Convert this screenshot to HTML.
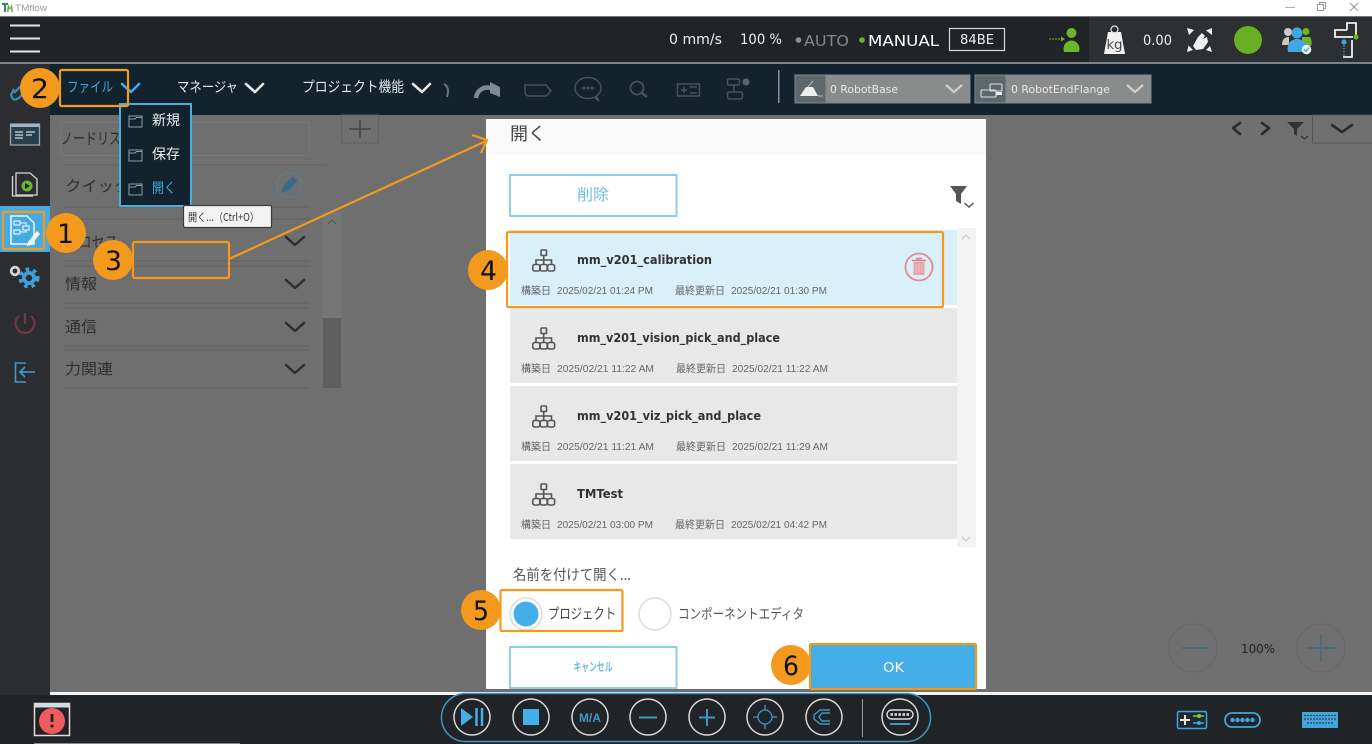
<!DOCTYPE html>
<html lang="ja">
<head>
<meta charset="utf-8">
<title>TMflow</title>
<style>
html,body{margin:0;padding:0;width:1372px;height:744px;overflow:hidden;background:#6f6f6f}
svg{display:block;position:absolute;left:0;top:0;filter:blur(.35px)}
text{font-family:"Liberation Sans","Noto Sans CJK JP",sans-serif;dominant-baseline:alphabetic}
.j{font-family:"Noto Sans CJK JP","Liberation Sans",sans-serif}
.d{font-family:"DejaVu Sans","Noto Sans CJK JP",sans-serif}
.ch{fill:none;stroke-width:2.6;stroke-linecap:round;stroke-linejoin:round}
.or{fill:none;stroke:#f39a1e;stroke-width:2.2}
.num{font-family:"DejaVu Sans",sans-serif;font-size:27px;fill:#111}
.cir{fill:#f39a1e}
</style>
</head>
<body>
<svg width="1372" height="744" viewBox="0 0 1372 744" xmlns="http://www.w3.org/2000/svg">
<defs>
<g id="tree" fill="none" stroke="#555" stroke-width="1.600">
<rect x="9" y="0.500" width="5.500" height="5.500" rx=".8"/>
<path d="M11.700 6V10M4 15V10.500H19.500V15M11.700 10.500V15"/>
<rect x="0.800" y="15" width="7" height="6.500" rx="1.800"/><rect x="8.200" y="15" width="7" height="6.500" rx="1.800"/><rect x="15.600" y="15" width="7" height="6.500" rx="1.800"/>
</g>
<g id="folder" fill="none" stroke="#8f9ca2" stroke-width="1">
<path d="M0 12V1H13V12Z"/><path d="M0 4H6L7.500 2.500H13"/>
</g>
</defs>

<!-- base areas -->
<rect x="0" y="0" width="1372" height="16" fill="#fff"/>
<rect x="0" y="16" width="1372" height="1" fill="#777"/>
<rect x="0" y="17" width="1372" height="46" fill="#212427"/>
<rect x="1089" y="17" width="283" height="46" fill="#2d3033"/>
<rect x="0" y="62" width="1372" height="2" fill="#7b8488"/>
<rect x="0" y="64" width="50" height="631" fill="#2b2d30"/>
<rect x="50" y="64" width="1322" height="51" fill="#12232d"/>
<rect x="50" y="115" width="1322" height="578" fill="#6f6f6f"/>
<rect x="50" y="692" width="1322" height="3" fill="#f4f4f4"/>
<rect x="0" y="695" width="1372" height="49" fill="#212427"/>
<rect x="34" y="743" width="206" height="1" fill="#8a8a8a"/>

<!-- title bar -->
<path d="M2 3H8V5H6V12H4V5H2Z" fill="#2b8a6b"/><path d="M7 12L8 4 10 8 12 4 13 12H11.500L11 8 10 10 9 8 8.500 12Z" fill="#6aa531"/>
<text x="15" y="11" font-size="9.500" fill="#9a9a9a" textLength="32" lengthAdjust="spacingAndGlyphs">TMflow</text>
<path d="M1285 7.500H1295" stroke="#aaa" stroke-width="1"/>
<rect x="1317.500" y="4.500" width="6" height="6" fill="none" stroke="#999"/><path d="M1319.500 4.500V2.500H1325.500V8.500H1323.500" fill="none" stroke="#999"/>
<path d="M1350 3L1358 11M1358 3L1350 11" stroke="#999" stroke-width="1"/>

<!-- top bar -->
<path d="M10 25.500H40M10 38.500H40M10 51.500H40" stroke="#e6e6e6" stroke-width="2"/>
<text class="d" x="669" y="44" font-size="14" fill="#eee" textLength="53" lengthAdjust="spacingAndGlyphs">0 mm/s</text>
<text class="d" x="740" y="44" font-size="14" fill="#eee" textLength="42" lengthAdjust="spacingAndGlyphs">100 %</text>
<circle cx="798.500" cy="40" r="2.800" fill="#8f9193"/>
<text class="d" x="804" y="46" font-size="15" fill="#85878a" textLength="45" lengthAdjust="spacingAndGlyphs">AUTO</text>
<circle cx="862" cy="40" r="2.800" fill="#6fb52c"/>
<text class="d" x="868" y="46" font-size="15" fill="#fff" textLength="71" lengthAdjust="spacingAndGlyphs">MANUAL</text>
<rect x="949.500" y="28.500" width="55" height="22" fill="none" stroke="#d8d8d8" stroke-width="1.200"/>
<text class="d" x="960" y="44" font-size="13" fill="#eee" textLength="34" lengthAdjust="spacingAndGlyphs">84BE</text>
<path d="M1049 39H1062" stroke="#6fb52c" stroke-width="1" stroke-dasharray="2 1"/><path d="M1061 36.500L1065 39 1061 41.500Z" fill="#6fb52c"/>
<circle cx="1071.500" cy="33" r="5" fill="#6fb52c"/><path d="M1064 52C1062 45 1067 40.500 1071.500 40.500S1081 45 1079 52Z" fill="#6fb52c"/>

<path d="M1108 32H1121L1125 54H1104Z" fill="#f2f2f2"/><circle cx="1114.500" cy="29.500" r="3.500" fill="none" stroke="#ddd" stroke-width="1.300"/>
<text class="d" x="1106.500" y="49" font-size="13" fill="#444" textLength="16" lengthAdjust="spacingAndGlyphs">kg</text>
<text class="d" x="1143" y="45" font-size="14" fill="#eee" textLength="29" lengthAdjust="spacingAndGlyphs">0.00</text>
<g fill="#f0f0f0">
<path d="M1193 46L1198 37 1202 33 1205 36 1203 39 1207 37 1208 42 1203 49 1196 50Z"/>
<path d="M1187 28L1194 30 1189 35ZM1212 28L1212 35 1206 30.500ZM1187 52L1188.500 45.500 1193 50ZM1212 52L1206 50 1210 46Z"/>
</g>
<circle cx="1288" cy="32" r="4" fill="#c9c9c9"/><path d="M1282 45C1282 39 1285 37 1289 37V45Z" fill="#c9c9c9"/>
<circle cx="1306" cy="31.500" r="3.500" fill="#6fb52c"/><path d="M1302 46V37H1310C1312 40 1312 43 1311 46Z" fill="#6fb52c"/>
<circle cx="1297" cy="33" r="5.500" fill="#41a7e0"/>
<path d="M1288 52C1286 44 1291 39 1297 39S1309 44 1307 52Z" fill="#41a7e0"/>
<circle cx="1306.500" cy="49.500" r="4.800" fill="#e8f3f8"/><path d="M1304 49.500L1306 51.500 1309 47.500" fill="none" stroke="#41a7e0" stroke-width="1.300"/>
<circle cx="1248" cy="40" r="14" fill="#6aaf23"/>
<path d="M1347 30V23H1356V35M1347 30H1335V37H1353M1352 40V57H1343" fill="none" stroke="#f0f0f0" stroke-width="1.800"/>
<circle cx="1356" cy="37" r="2.500" fill="#6fb52c"/>
<circle cx="1344" cy="42" r="2.500" fill="#41a7e0"/><path d="M1344 45V56" stroke="#41a7e0" stroke-width="1.200" stroke-dasharray="1.500 1.500"/>

<!-- toolbar menu -->
<text class="j" x="67" y="92" font-size="14" fill="#44a8de" textLength="46" lengthAdjust="spacingAndGlyphs">ファイル</text>
<polyline class="ch" points="122,84 131,92 139,84" stroke="#44a8de"/>
<text class="j" x="177" y="92" font-size="14" fill="#e4e6e7" textLength="61" lengthAdjust="spacingAndGlyphs">マネージャ</text>
<polyline class="ch" points="246,84 255,92 263,84" stroke="#e8e8e8"/>
<text class="j" x="302" y="92" font-size="14.500" fill="#e4e6e7" textLength="102" lengthAdjust="spacingAndGlyphs">プロジェクト機能</text>
<polyline class="ch" points="413,84 422,92 430,84" stroke="#e8e8e8"/>

<g fill="none" stroke="#47545a" stroke-width="1.500">
<path d="M444 84C448 86 449 91 447 97" stroke="#6c777c" stroke-width="2"/>
<path d="M476 98C477 90 484 86 491 88" stroke="#7e8a90" stroke-width="4.500"/>
<path d="M490 82L500 87 500 97 490 93Z" fill="#7e8a90" stroke="none"/>
<path d="M525 85H546L551 91 546 96H530Q525 96 525 92Z"/>
<ellipse cx="588" cy="88" rx="13" ry="10.500"/><path d="M595 98L599 101 596 96"/>
<circle cx="584" cy="88" r=".8" fill="#47545a"/><circle cx="588" cy="88" r=".8" fill="#47545a"/><circle cx="592" cy="88" r=".8" fill="#47545a"/>
<circle cx="637" cy="88" r="6.500" stroke-width="1.800"/><path d="M642 93L647 97" stroke-width="2.500"/>
<rect x="677.500" y="84" width="22" height="12"/><path d="M681 90H687M684 87V93M690 87H697M690 93H697"/>
<rect x="727.500" y="79" width="12" height="6" rx="1.500"/><rect x="727.500" y="92" width="15" height="7" rx="2"/><path d="M734 85V92"/>
<circle cx="746" cy="82" r="3.500" fill="#5a676d" stroke="none"/>
</g>
<rect x="778" y="70" width="1.500" height="33" fill="#8a9297"/>
<rect x="795" y="75" width="175" height="28" fill="#8a8b8b" stroke="#7b8a92"/>
<rect x="795.500" y="75.500" width="30" height="27" fill="#5d686d"/>
<path d="M800 96L806 87H813L818 96Z" fill="#eee"/><path d="M808 87L813 81M818 96H823" stroke="#bbb" stroke-width="1"/>
<text class="d" x="830" y="93" font-size="10.500" fill="#e8e8e8" textLength="68" lengthAdjust="spacingAndGlyphs">0&#160;RobotBase</text>
<polyline points="946,85 954,92 962,85" fill="none" stroke="#cfcfcf" stroke-width="2.200"/>
<rect x="975" y="75" width="176" height="28" fill="#8a8b8b" stroke="#7b8a92"/>
<rect x="975.500" y="75.500" width="30" height="27" fill="#5d686d"/>
<g fill="none" stroke="#ddd" stroke-width="1.100"><rect x="990" y="84" width="12" height="7" rx="1"/><rect x="981" y="90" width="15" height="7" rx="1"/></g><rect x="996" y="92" width="6" height="3" fill="#eee"/>
<text class="d" x="1011" y="93" font-size="10.500" fill="#e8e8e8" textLength="99" lengthAdjust="spacingAndGlyphs">0&#160;RobotEndFlange</text>
<polyline points="1127,85 1135,92 1143,85" fill="none" stroke="#cfcfcf" stroke-width="2.200"/>

<!-- left panel -->
<rect x="60.500" y="122.500" width="249" height="33" fill="none" stroke="#777"/>
<text class="j" x="61" y="144" font-size="16" fill="#2d2d2d" textLength="72" lengthAdjust="spacingAndGlyphs">ノードリスト</text>
<path d="M64 165H327M64 207H310M64 219H310M64 261H310M64 266H310M64 303H310M64 308H310M64 346H310M64 350H310M64 388H310" stroke="#606060" stroke-width="1"/>
<text class="j" x="65" y="191" font-size="15" fill="#2f2f2f" textLength="128" lengthAdjust="spacingAndGlyphs">クイックリスト...</text>
<circle cx="289" cy="185" r="12.500" fill="none" stroke="#5f7a8a" stroke-width="1.500"/>
<path d="M281.500 192.500L283 186 293 176.500 297.500 181 288 191Z" fill="#376a87"/>
<text class="j" x="65" y="247" font-size="15" fill="#2f2f2f" textLength="53" lengthAdjust="spacingAndGlyphs">プロセス</text>
<text class="j" x="65" y="289" font-size="15" fill="#2f2f2f" textLength="32" lengthAdjust="spacingAndGlyphs">情報</text>
<text class="j" x="65" y="332" font-size="15" fill="#2f2f2f" textLength="32" lengthAdjust="spacingAndGlyphs">通信</text>
<text class="j" x="65" y="374" font-size="15" fill="#2f2f2f" textLength="48" lengthAdjust="spacingAndGlyphs">力関連</text>
<g class="ch" stroke="#2e2e2e" fill="none" style="stroke-width:2.500">
<polyline points="286,237 295,245 304,237"/><polyline points="286,280 295,288 304,280"/><polyline points="286,323 295,331 304,323"/><polyline points="286,365 295,373 304,365"/>
</g>
<rect x="323" y="212" width="18" height="106" fill="#767676"/>
<rect x="323" y="318" width="18" height="70" fill="#5e5e5e"/>
<polyline points="328,224 332,220 336,224" fill="none" stroke="#555" stroke-width="1.200"/>

<!-- plus box + right tools -->
<rect x="341.500" y="115" width="37" height="28" fill="none" stroke="#616161"/>
<path d="M360 120V138M349 129H371" stroke="#444" stroke-width="1.500"/>
<polyline class="ch" points="1240,123 1233,128 1240,134" stroke="#2a2a2a"/>
<polyline class="ch" points="1262,123 1269,128 1262,134" stroke="#2a2a2a"/>
<path d="M1287 122H1304L1297 129V136L1294 134V129Z" fill="#333"/>
<polyline points="1301,136 1304.500,139 1308,136" fill="none" stroke="#333" stroke-width="1.200"/>
<rect x="1312.500" y="115" width="60" height="28" fill="none" stroke="#555"/>
<polyline class="ch" points="1332,125 1342,132 1352,125" stroke="#2a2a2a"/>

<!-- zoom controls -->
<circle cx="1193" cy="648" r="24" fill="none" stroke="#666" stroke-width="1"/>
<path d="M1182 648H1208" stroke="#4c6b7a" stroke-width="2"/>
<text class="d" x="1241" y="653" font-size="12.500" fill="#222" textLength="34" lengthAdjust="spacingAndGlyphs">100%</text>
<circle cx="1321" cy="648" r="24" fill="none" stroke="#666" stroke-width="1"/>
<path d="M1307 648H1336M1321 634V662" stroke="#4c6b7a" stroke-width="2"/>

<!-- sidebar icons -->
<g fill="none" stroke="#3d8cb8" stroke-width="2.200"><path d="M14 96L24 86Q28 83 28 90L20 100Q13 106 11 98L14 92" transform="translate(0,-3)"/></g>
<rect x="10.500" y="124" width="29" height="21" fill="#2a3f4d" stroke="#9aa6ac" stroke-width="1.300"/>
<rect x="11" y="124" width="28" height="3" fill="#9fb4c0"/>
<path d="M15 132H23M15 135H23M15 138H23M26 132H35M26 135H32" stroke="#cfd6da" stroke-width="1.300"/>
<path d="M16 173H30L37 179V195H16Z" fill="#2b2d30" stroke="#d6d6d6" stroke-width="1.300"/>
<path d="M12.500 176V196H33" fill="none" stroke="#d6d6d6" stroke-width="1.300"/>
<circle cx="27" cy="186" r="5.500" fill="#6fb52c"/><path d="M25 183V189L30 186Z" fill="#222"/>
<rect x="0" y="206" width="50" height="46" fill="#46abe0"/>
<path d="M11 216H27L34 223V244H11Z" fill="none" stroke="#eef8fd" stroke-width="1.500"/>
<g fill="none" stroke="#eef8fd" stroke-width="1.100"><rect x="14" y="221" width="6" height="4"/><rect x="14" y="230" width="6" height="4"/><rect x="23" y="226" width="6" height="4"/><path d="M20 223H26V226M20 232H26V230"/></g>
<path d="M28 242L37 231 40 234 31 245 27 246Z" fill="#f6f6f6"/>
<g fill="#3f9fd8"><circle cx="29" cy="278" r="7"/><g stroke="#3f9fd8" stroke-width="4" stroke-dasharray="3.500 3.800" fill="none"><circle cx="29" cy="278" r="8.500"/></g></g>
<circle cx="29" cy="278" r="3.200" fill="#2b2d30"/>
<circle cx="15" cy="271" r="3.800" fill="none" stroke="#d4d4d4" stroke-width="2.800"/>
<g fill="none" stroke="#6d3b42" stroke-width="2.200"><path d="M19 316A9.500 9.500 0 1 0 31 316"/><path d="M25 313V324"/></g>
<g fill="none" stroke="#3d9cd0" stroke-width="1.600"><path d="M26 363H15.500V382H26"/><path d="M35 372H20M25 367L20 372 25 377"/></g>

<!-- dropdown -->
<rect x="120" y="104" width="71" height="102" fill="#12232d" stroke="#47aee2" stroke-width="2"/>
<use href="#folder" x="129" y="115"/><use href="#folder" x="129" y="149"/><use href="#folder" x="129" y="183"/>
<text class="j" x="152" y="125" font-size="14" fill="#eee" textLength="28" lengthAdjust="spacingAndGlyphs">新規</text>
<text class="j" x="152" y="159" font-size="14" fill="#eee" textLength="28" lengthAdjust="spacingAndGlyphs">保存</text>
<text class="j" x="152" y="193" font-size="14" fill="#44a8de" textLength="24" lengthAdjust="spacingAndGlyphs">開く</text>
<rect x="183.500" y="205.500" width="88" height="22" rx="1.500" fill="#f3f3f3" stroke="#3c3c3c" stroke-width="1.200"/>
<text class="j" x="188" y="221" font-size="11" fill="#333" textLength="71" lengthAdjust="spacingAndGlyphs">開く...（Ctrl+O）</text>

<!-- dialog -->
<rect x="486" y="119" width="500" height="570" fill="#fff"/>
<rect x="486" y="119" width="500" height="36" fill="#fafafa"/>
<text class="j" x="510" y="140" font-size="18" fill="#444" textLength="36" lengthAdjust="spacingAndGlyphs">開く</text>
<rect x="510" y="175" width="166.500" height="41" fill="#fff" stroke="#8dcdec" stroke-width="2"/>
<text class="j" x="577" y="200" font-size="15.500" fill="#70bce4" textLength="32" lengthAdjust="spacingAndGlyphs">削除</text>
<path d="M950 186H967L961 194V204L956 201V194Z" fill="#555"/>
<polyline points="964.500,203 969,207 973.500,203" fill="none" stroke="#555" stroke-width="1.500"/>

<rect x="957" y="228" width="19" height="319" fill="#f3f3f3"/>
<polyline points="962,239 966,235 970,239" fill="none" stroke="#ccc" stroke-width="1.300"/>
<polyline points="962,537 966,541 970,537" fill="none" stroke="#ccc" stroke-width="1.300"/>

<rect x="510" y="230" width="447" height="75" fill="#d9effa"/>
<rect x="510" y="308" width="447" height="75" fill="#e8e8e8"/>
<rect x="510" y="386" width="447" height="75" fill="#e8e8e8"/>
<rect x="510" y="464" width="447" height="75" fill="#e8e8e8"/>

<use href="#tree" x="532" y="249.500"/>
<use href="#tree" x="532" y="327.500"/>
<use href="#tree" x="532" y="405.500"/>
<use href="#tree" x="532" y="483.500"/>

<g class="d" font-weight="bold" font-size="12" fill="#333">
<text class="d" x="577" y="264" textLength="135" lengthAdjust="spacingAndGlyphs">mm_v201_calibration</text>
<text class="d" x="577" y="342" textLength="203" lengthAdjust="spacingAndGlyphs">mm_v201_vision_pick_and_place</text>
<text class="d" x="577" y="420" textLength="184" lengthAdjust="spacingAndGlyphs">mm_v201_viz_pick_and_place</text>
<text class="d" x="577" y="498" textLength="46" lengthAdjust="spacingAndGlyphs">TMTest</text>
</g>
<g font-size="10.500" fill="#666">
<text class="j" x="521" y="294" textLength="30" lengthAdjust="spacingAndGlyphs">構築日</text>
<text x="557" y="294" textLength="96" lengthAdjust="spacingAndGlyphs">2025/02/21 01:24 PM</text>
<text class="j" x="675" y="294" textLength="50" lengthAdjust="spacingAndGlyphs">最終更新日</text>
<text x="731" y="294" textLength="96" lengthAdjust="spacingAndGlyphs">2025/02/21 01:30 PM</text>
<text class="j" x="521" y="372" textLength="30" lengthAdjust="spacingAndGlyphs">構築日</text>
<text x="557" y="372" textLength="97" lengthAdjust="spacingAndGlyphs">2025/02/21 11:22 AM</text>
<text class="j" x="676" y="372" textLength="50" lengthAdjust="spacingAndGlyphs">最終更新日</text>
<text x="732" y="372" textLength="96" lengthAdjust="spacingAndGlyphs">2025/02/21 11:22 AM</text>
<text class="j" x="521" y="450" textLength="30" lengthAdjust="spacingAndGlyphs">構築日</text>
<text x="557" y="450" textLength="97" lengthAdjust="spacingAndGlyphs">2025/02/21 11:21 AM</text>
<text class="j" x="676" y="450" textLength="50" lengthAdjust="spacingAndGlyphs">最終更新日</text>
<text x="732" y="450" textLength="96" lengthAdjust="spacingAndGlyphs">2025/02/21 11:29 AM</text>
<text class="j" x="521" y="528" textLength="30" lengthAdjust="spacingAndGlyphs">構築日</text>
<text x="557" y="528" textLength="96" lengthAdjust="spacingAndGlyphs">2025/02/21 03:00 PM</text>
<text class="j" x="675" y="528" textLength="50" lengthAdjust="spacingAndGlyphs">最終更新日</text>
<text x="731" y="528" textLength="96" lengthAdjust="spacingAndGlyphs">2025/02/21 04:42 PM</text>
</g>
<circle cx="919" cy="267" r="13.500" fill="none" stroke="#e58a8f" stroke-width="1.800"/>
<path d="M913.500 262H924.500V275H913.500Z" fill="#e9a3a7"/>
<path d="M912 260.500H926M916 258.500H922" stroke="#e0787e" stroke-width="1.500"/>
<path d="M916 264V273M919 264V273M922 264V273" stroke="#f3d0d2" stroke-width=".8"/>

<text class="j" x="513" y="580" font-size="14.500" fill="#555" textLength="118" lengthAdjust="spacingAndGlyphs">名前を付けて開く...</text>
<circle cx="526" cy="614" r="16" fill="#fff" stroke="#ddd" stroke-width="1.500"/>
<circle cx="526" cy="614" r="12.500" fill="#43aee8"/>
<text class="j" x="548" y="619" font-size="14.500" fill="#444" textLength="68" lengthAdjust="spacingAndGlyphs">プロジェクト</text>
<circle cx="655" cy="614" r="16" fill="#fff" stroke="#ddd" stroke-width="1.500"/>
<text class="j" x="678" y="619" font-size="14" fill="#555" textLength="126" lengthAdjust="spacingAndGlyphs">コンポーネントエディタ</text>
<rect x="510" y="647" width="166.500" height="41" fill="#fff" stroke="#8dcdec" stroke-width="2"/>
<text class="j" x="573.500" y="671" font-size="12" font-weight="bold" fill="#70bce4" textLength="39" lengthAdjust="spacingAndGlyphs">キャンセル</text>
<rect x="810" y="644" width="166" height="45" fill="#43aee8"/>
<text class="d" x="883" y="672" font-size="13.500" fill="#fff" textLength="21" lengthAdjust="spacingAndGlyphs">OK</text>

<!-- bottom bar -->
<rect x="441.500" y="693.500" width="489" height="48" rx="24" fill="#212427" stroke="#3f97c4" stroke-width="1.500"/>
<g fill="none" stroke="#d8d8d8" stroke-width="1.500">
<circle cx="472" cy="717" r="18"/><circle cx="531" cy="717" r="18"/><circle cx="590" cy="717" r="18"/><circle cx="648" cy="717" r="18"/><circle cx="707" cy="717" r="18"/><circle cx="765" cy="717" r="18"/><circle cx="824" cy="717" r="18"/><circle cx="900" cy="717" r="18"/>
</g>
<path d="M461 708L473 717 461 726Z" fill="#43aee8"/>
<path d="M476.500 708V726M482 708V726" stroke="#43aee8" stroke-width="2.500"/>
<rect x="523" y="709" width="16" height="16" fill="#43aee8"/>
<text x="579" y="722" font-size="11.500" font-weight="bold" fill="#3f97c4" textLength="22" lengthAdjust="spacingAndGlyphs">M/A</text>
<path d="M639 717.500H657M699 717.500H715M707 709V726" stroke="#3f97c4" stroke-width="2"/>
<circle cx="765" cy="717" r="7" fill="none" stroke="#3f97c4" stroke-width="1.300"/>
<path d="M765 705V710M765 724V729M753 717H758M772 717H777" stroke="#3f97c4" stroke-width="1.300"/>
<path d="M830 710H820L814 715V719L820 724H830M830 713H822L819 717 822 721H830" fill="none" stroke="#3f97c4" stroke-width="1.400"/>
<rect x="862" y="699" width="1" height="38" fill="#9a9a9a"/>
<rect x="887" y="710" width="26" height="9" rx="4.500" fill="none" stroke="#e0e0e0" stroke-width="1.400"/>
<path d="M890.500 714.500H910" stroke="#e0e0e0" stroke-width="2.500" stroke-dasharray="2.500 1.500"/>
<path d="M890 724H910" stroke="#3f97c4" stroke-width="2"/>

<rect x="34.500" y="703.500" width="35" height="32" fill="#222" stroke="#dcdcdc" stroke-width="1.500"/>
<rect x="35" y="704" width="34" height="3.500" fill="#cfdde4"/>
<circle cx="52" cy="721" r="13" fill="#ee5a60"/>
<path d="M52 714V722" stroke="#222" stroke-width="2.800"/><circle cx="52" cy="726" r="1.600" fill="#222"/>

<rect x="1177.500" y="711.500" width="29" height="17" rx="1.500" fill="#1f2a30" stroke="#43a5da" stroke-width="1.500"/>
<path d="M1185 715V725M1180 720H1190" stroke="#e5e5e5" stroke-width="2"/>
<path d="M1193 716H1204" stroke="#8cc63f" stroke-width="1.500"/><circle cx="1199" cy="716" r="2" fill="#8cc63f"/>
<path d="M1193 723H1204" stroke="#43a5da" stroke-width="1.500"/><circle cx="1199" cy="723" r="2" fill="#43a5da"/>
<rect x="1225" y="713" width="35" height="14" rx="7" fill="none" stroke="#43a5da" stroke-width="1.800"/>
<g fill="#43a5da"><circle cx="1232.500" cy="720" r="2.200"/><circle cx="1237.500" cy="720" r="2.200"/><circle cx="1242.500" cy="720" r="2.200"/><circle cx="1247.500" cy="720" r="2.200"/><circle cx="1252.500" cy="720" r="2.200"/></g>
<rect x="1302" y="712" width="36" height="16" fill="#43a5da"/>
<path d="M1304 715.500H1336M1304 719H1336M1307 723H1333" stroke="#1d4a63" stroke-width="1.200" stroke-dasharray="2 1"/>

<!-- orange annotations -->
<rect class="or" x="60" y="70" width="68" height="36" rx="1.500"/>
<rect class="or" x="3" y="212" width="41" height="37" rx="1.500"/>
<rect class="or" x="133" y="242" width="96" height="36" rx="1.500"/>
<rect class="or" x="507" y="232" width="436" height="75" rx="1.500"/>
<rect class="or" x="500.500" y="590" width="122" height="41" rx="1.500"/>
<rect class="or" x="810" y="644" width="166" height="45" rx="1.500"/>
<path d="M229 259L486 141" class="or"/>
<path d="M472 135L487 140 481 153" class="or"/>
<circle class="cir" cx="40" cy="88" r="20"/><text class="num" x="31" y="98" textLength="18" lengthAdjust="spacingAndGlyphs">2</text>
<circle class="cir" cx="66" cy="233" r="20"/><text class="num" x="57" y="243" textLength="17" lengthAdjust="spacingAndGlyphs">1</text>
<circle class="cir" cx="113" cy="260" r="20"/><text class="num" x="105" y="270" textLength="17" lengthAdjust="spacingAndGlyphs">3</text>
<circle class="cir" cx="488" cy="270" r="20"/><text class="num" x="480" y="280" textLength="17" lengthAdjust="spacingAndGlyphs">4</text>
<circle class="cir" cx="481" cy="610" r="20"/><text class="num" x="473" y="620" textLength="16" lengthAdjust="spacingAndGlyphs">5</text>
<circle class="cir" cx="791" cy="665" r="20"/><text class="num" x="783" y="675" textLength="16" lengthAdjust="spacingAndGlyphs">6</text>
</svg>
</body>
</html>
